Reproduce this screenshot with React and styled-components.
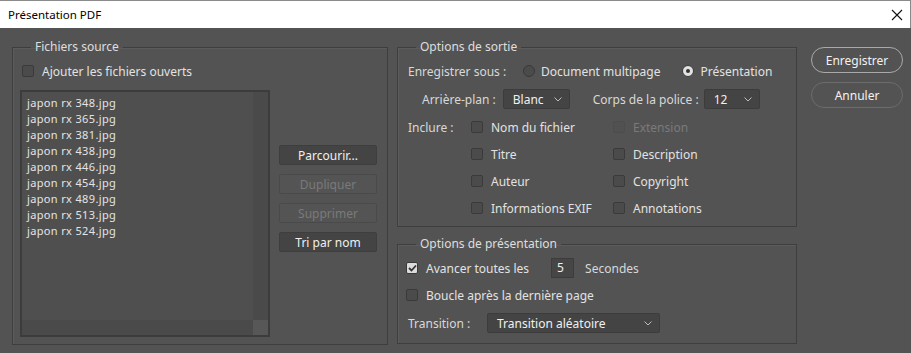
import styled, { createGlobalStyle } from 'styled-components';

const GlobalStyle = createGlobalStyle`
  html, body {
    margin: 0;
    padding: 0;
    background: #535353;
  }
  body {
    font-family: "Noto Sans", "Liberation Sans", sans-serif;
    font-size: 12px;
    color: #dcdcdc;
  }
`;

const Window = styled.div`
  width: 911px;
  height: 353px;
  display: flex;
  flex-direction: column;
  background: #535353;
  box-sizing: border-box;
  overflow: hidden;
`;

const TitleBar = styled.div`
  height: 28px;
  box-sizing: border-box;
  border-top: 1px solid #8a8a8a;
  border-right: 1px solid #8a8a8a;
  background: #ffffff;
  display: flex;
  align-items: center;
  justify-content: space-between;
  padding: 0 6px 0 8px;
  color: #000;
  font-size: 11.5px;
`;

const CloseIcon = () => (
  <svg width="14" height="14" viewBox="0 0 14 14">
    <path d="M2 2 L12 12 M12 2 L2 12" stroke="#111" strokeWidth="1.1" />
  </svg>
);

const Body = styled.div`
  display: flex;
  padding: 11px 0 0 12px;
  gap: 9px;
`;

const Group = styled.fieldset`
  margin: 0;
  min-width: 0;
  border: 1px solid #3e3e3e;
  box-shadow: inset 1px 1px 0 #5c5c5c;
  padding: 0 ${(p) => p.$padX ?? 7}px ${(p) => p.$padB ?? 8}px;
  width: ${(p) => p.$w}px;
  height: ${(p) => p.$h}px;
  box-sizing: border-box;
  display: flex;
  flex-direction: column;
`;

const Legend = styled.legend`
  margin-left: ${(p) => p.$ml ?? 18}px;
  padding: 0 4px;
  line-height: 16px;
  color: #dedede;
`;

const Row = styled.div`
  display: flex;
  align-items: center;
  height: 20px;
  margin-top: ${(p) => p.$mt || 0}px;
  padding-left: ${(p) => p.$pl || 0}px;
`;

const Box = styled.span`
  width: 12px;
  height: 12px;
  box-sizing: border-box;
  border-radius: 2px;
  border: 1px solid ${(p) => (p.$disabled ? '#4d4d4d' : '#3a3a3a')};
  background: ${(p) => (p.$checked ? '#dcdcdc' : p.$disabled ? '#515151' : '#4b4b4b')};
  display: inline-flex;
  align-items: center;
  justify-content: center;
  flex: none;
`;

const CheckLabel = styled.span`
  margin-left: 8px;
  color: ${(p) => (p.$disabled ? '#7a7a7a' : '#e2e2e2')};
  white-space: nowrap;
`;

const CheckItem = styled.label`
  display: flex;
  align-items: center;
  height: 20px;
`;

const Check = ({ label, checked, disabled }) => (
  <CheckItem>
    <Box $checked={checked} $disabled={disabled}>
      {checked && (
        <svg width="9" height="8" viewBox="0 0 9 8">
          <path d="M1 4 L3.5 6.5 L8 1.5" stroke="#333" strokeWidth="1.8" fill="none" />
        </svg>
      )}
    </Box>
    <CheckLabel $disabled={disabled}>{label}</CheckLabel>
  </CheckItem>
);

const RadioDot = styled.span`
  width: 12px;
  height: 12px;
  box-sizing: border-box;
  border-radius: 50%;
  border: 1px solid #3a3a3a;
  background: ${(p) => (p.$on ? '#e2e2e2' : '#4b4b4b')};
  display: inline-flex;
  align-items: center;
  justify-content: center;
  flex: none;
  &::after {
    content: '';
    display: ${(p) => (p.$on ? 'block' : 'none')};
    width: 4px;
    height: 4px;
    border-radius: 50%;
    background: #333;
  }
`;

const RadioItem = styled.label`
  display: flex;
  align-items: center;
  gap: 6px;
  margin-left: ${(p) => p.$ml || 0}px;
  color: #e2e2e2;
`;

const ListArea = styled.div`
  display: flex;
  margin-top: 9px;
`;

const FileList = styled.div`
  width: 250px;
  height: 247px;
  box-sizing: border-box;
  border: 2px solid #3c3c3c;
  display: grid;
  grid-template-columns: 1fr 15px;
  grid-template-rows: 1fr 15px;
  background: #4f4f4f;
`;

const Items = styled.ul`
  list-style: none;
  margin: 0;
  padding: 3px 0 0 5px;
  font-size: 11px;
  letter-spacing: 0.35px;
  color: #e4e4e4;
`;

const Item = styled.li`
  height: 16px;
  line-height: 16px;
`;

const VScroll = styled.div`
  background: #4a4a4a;
`;

const HScroll = styled.div`
  background: #4a4a4a;
`;

const Corner = styled.div`
  background: #575757;
`;

const SideButtons = styled.div`
  display: flex;
  flex-direction: column;
  gap: 9px;
  margin: 55px 0 0 9px;
  width: 98px;
`;

const Btn = styled.button`
  height: 20px;
  box-sizing: border-box;
  font: inherit;
  padding: 0;
  border-radius: 2px;
  border: 1px solid ${(p) => (p.disabled ? '#4a4a4a' : '#3e3e3e')};
  background: ${(p) => (p.disabled ? '#545454' : '#444444')};
  color: ${(p) => (p.disabled ? '#7a7a7a' : '#f0f0f0')};
`;

const RightCol = styled.div`
  display: flex;
  flex-direction: column;
  gap: 9px;
`;

const Label = styled.span`
  color: #d8d8d8;
  width: ${(p) => (p.$w ? `${p.$w}px` : 'auto')};
  margin-left: ${(p) => p.$ml || 0}px;
  white-space: nowrap;
  flex: none;
`;

const Select = styled.div`
  width: ${(p) => p.$w}px;
  height: 20px;
  box-sizing: border-box;
  margin-left: ${(p) => p.$ml || 0}px;
  border: 1px solid #3c3c3c;
  border-radius: 2px;
  background: #444444;
  color: #f0f0f0;
  display: flex;
  align-items: center;
  justify-content: space-between;
  padding: 0 7px 0 ${(p) => p.$pl || 9}px;
`;

const Chevron = () => (
  <svg width="8" height="5" viewBox="0 0 8 5">
    <path d="M0.5 0.5 L4 4 L7.5 0.5" stroke="#bdbdbd" strokeWidth="1" fill="none" />
  </svg>
);

const IncludeGrid = styled.div`
  display: grid;
  grid-template-columns: 63px 142px 1fr;
  grid-auto-rows: 20px;
  row-gap: 7px;
  margin-top: 8px;
  padding-left: 10px;
  align-items: center;
`;

const NumberBox = styled.div`
  width: 23px;
  height: 20px;
  box-sizing: border-box;
  margin-left: 22px;
  border: 1px solid #3c3c3c;
  background: #464646;
  color: #f0f0f0;
  padding-left: 5px;
  line-height: 18px;
`;

const DialogButtons = styled.div`
  display: flex;
  flex-direction: column;
  gap: 9px;
  margin: 8px 0 0 5px;
  width: 92px;
`;

const PillBtn = styled.button`
  height: 26px;
  font: inherit;
  padding: 0;
  border-radius: 13px;
  background: #535353;
  color: #f2f2f2;
  border: 1px solid ${(p) => (p.$primary ? '#a9a9a9' : '#6c6c6c')};
`;

const files = ['348', '365', '381', '438', '446', '454', '489', '513', '524'];

export default function App() {
  return (
    <>
      <GlobalStyle />
      <Window>
        <TitleBar>
          <span>Présentation PDF</span>
          <CloseIcon />
        </TitleBar>
        <Body>
          <Group $w={376} $h={306}>
            <Legend $ml={11}>Fichiers source</Legend>
            <Row $mt={6} $pl={2}>
              <Check label="Ajouter les fichiers ouverts" />
            </Row>
            <ListArea>
              <FileList>
                <Items>
                  {files.map((n) => (
                    <Item key={n}>japon rx {n}.jpg</Item>
                  ))}
                </Items>
                <VScroll />
                <HScroll />
                <Corner />
              </FileList>
              <SideButtons>
                <Btn>Parcourir...</Btn>
                <Btn disabled>Dupliquer</Btn>
                <Btn disabled>Supprimer</Btn>
                <Btn>Tri par nom</Btn>
              </SideButtons>
            </ListArea>
          </Group>

          <RightCol>
            <Group $w={400} $h={188} $padX={0} $padB={7}>
              <Legend>Options de sortie</Legend>
              <Row $mt={6} $pl={10}>
                <Label $w={115}>Enregistrer sous :</Label>
                <RadioItem>
                  <RadioDot />
                  Document multipage
                </RadioItem>
                <RadioItem $ml={22}>
                  <RadioDot $on />
                  Présentation
                </RadioItem>
              </Row>
              <Row $mt={8} $pl={24}>
                <Label>Arrière-plan :</Label>
                <Select $w={67} $ml={7}>
                  Blanc
                  <Chevron />
                </Select>
                <Label $ml={23}>Corps de la police :</Label>
                <Select $w={56} $ml={5}>
                  12
                  <Chevron />
                </Select>
              </Row>
              <IncludeGrid>
                <Label>Inclure :</Label>
                <Check label="Nom du fichier" />
                <Check label="Extension" disabled />
                <span />
                <Check label="Titre" />
                <Check label="Description" />
                <span />
                <Check label="Auteur" />
                <Check label="Copyright" />
                <span />
                <Check label="Informations EXIF" />
                <Check label="Annotations" />
              </IncludeGrid>
            </Group>

            <Group $w={400} $h={108} $padX={0} $padB={10}>
              <Legend>Options de présentation</Legend>
              <Row $mt={6} $pl={8}>
                <Check label="Avancer toutes les" checked />
                <NumberBox>5</NumberBox>
                <Label $ml={11}>Secondes</Label>
              </Row>
              <Row $mt={7} $pl={8}>
                <Check label="Boucle après la dernière page" />
              </Row>
              <Row $mt={8} $pl={10}>
                <Label $w={79}>Transition :</Label>
                <Select $w={173}>
                  Transition aléatoire
                  <Chevron />
                </Select>
              </Row>
            </Group>
          </RightCol>

          <DialogButtons>
            <PillBtn $primary>Enregistrer</PillBtn>
            <PillBtn>Annuler</PillBtn>
          </DialogButtons>
        </Body>
      </Window>
    </>
  );
}
